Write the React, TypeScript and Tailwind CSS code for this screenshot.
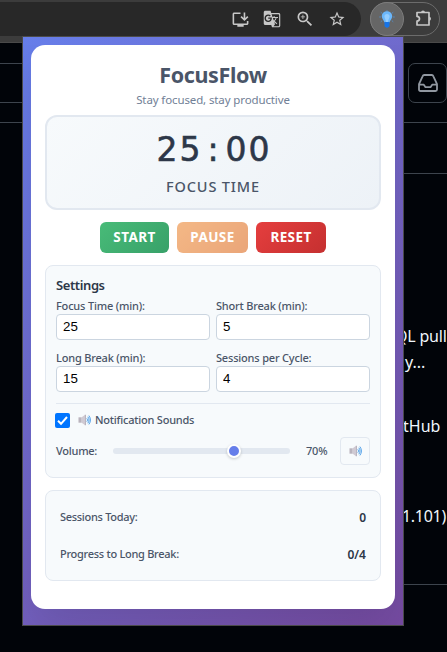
import React, { useState } from "react";
import { MdInstallDesktop, MdGTranslate, MdZoomIn, MdStarBorder } from "react-icons/md";

const sans = "font-['Noto_Sans','Open_Sans',sans-serif]";

function Bulb() {
  return (
    <svg width="18" height="18" viewBox="0 0 18 18">
      <g stroke="#4a9df0" strokeWidth="0.8" strokeLinecap="round" opacity="0.8">
        <path d="M1.6 7h1.2M15.2 7h1.2M3 2.4l.9.8M15 2.4l-.9.8M3 11.6l.9-.8M15 11.6l-.9-.8M9 0v.6" />
      </g>
      <path d="M9 1.2c-3.1 0-5.2 2.2-5.2 5 0 2.7 2.2 3.800 2.700 6.300h5c.5-2.500 2.700-3.600 2.700-6.300 0-2.800-2.100-5-5.200-5z" fill="#6bb7fb" />
      <path d="M9 4c-1.600 0-2.600 1-2.600 2.300 0 1.700 1.300 3 1.700 6.200h1.800c.4-3.200 1.700-4.500 1.700-6.200C11.600 5 10.600 4 9 4z" fill="#94cdff" />
      <path d="M6.500 12h5v3.600c0 1.300-1.200 2.200-2.500 2.200s-2.500-.9-2.500-2.200z" fill="#1674e8" />
    </svg>
  );
}

function Puzzle() {
  return (
    <svg width="18" height="18" viewBox="0 0 18 18" fill="none" stroke="#c7c7c7" strokeWidth="1.700" strokeLinejoin="round">
      <path d="M2 3.500h12v12.500H2v-3.800c1.500-.2 2.500-1.100 2.500-2.400S3.500 7.600 2 7.400z" />
      <path d="M6 3.500a2 2 0 0 1 4 0zM14 7.800a2 2 0 0 1 0 4z" fill="#c7c7c7" stroke="none" />
    </svg>
  );
}

function Inbox() {
  return (
    <svg width="20" height="18" viewBox="0 0 20 18" fill="none" stroke="#9198a1" strokeWidth="1.800" strokeLinejoin="round" strokeLinecap="round">
      <path d="M1 10.200 4.600 2.300C4.900 1.500 5.400 1 6.200 1h7.600c.8 0 1.300.5 1.600 1.300L19 10.200v5.300c0 1-.5 1.500-1.500 1.500h-15c-1 0-1.500-.5-1.500-1.500zM1 10.700h4.800l1.700 2.500h5l1.700-2.500H19" />
    </svg>
  );
}

function Speaker() {
  return (
    <svg width="13" height="12" viewBox="0 0 13 12" fill="none">
      <path d="M.5 3.300h3.200v5.400H.5z" fill="#b9b3bd" />
      <path d="M3.700 3.300 6.800 1v10L3.700 8.700z" fill="#d0cad3" />
      <path d="M6.800.8h1v10.400h-1z" fill="#aaa3ae" />
      <path d="M8.800 4.300c.9 1 .9 2.400 0 3.400M9.800 2.800c1.600 1.900 1.600 4.500 0 6.400M10.900 1.600c2 2.700 2 6.100 0 8.800" stroke="#4f9fe8" strokeWidth="1" />
    </svg>
  );
}

function Toolbar() {
  return (
    <div className="flex h-[43px] items-start border-b border-[#4a4a4a] bg-[#3c3c3c] pt-[2px]">
      <div className="flex h-[34px] w-[361px] shrink-0 items-center rounded-r-[17px] bg-[#282828] pl-[231px] text-[#c7c7c7]">
        <MdInstallDesktop size={19} />
        <MdGTranslate size={18} className="ml-[13px]" />
        <MdZoomIn size={20} className="ml-[14px]" />
        <MdStarBorder size={18} className="ml-[13px]" />
      </div>
      <div className="ml-[9px] flex h-[34px] w-[70px] shrink-0 rounded-full border border-[#6c6c6c]">
        <div className="-ml-px -mt-px flex h-[34px] w-[34px] items-center justify-center rounded-full border border-[#7c7c7c] bg-[#666]">
          <Bulb />
        </div>
        <div className="ml-[11px] mt-[6px]"><Puzzle /></div>
      </div>
    </div>
  );
}

function BackPage() {
  return (
    <div className="flex h-[609px] justify-between bg-[#010409]">
      <div className="w-[22px]">
        <div className="mt-[20px] h-[40px] border-y border-[#3d444d]" />
        <div className="mt-[19px] border-t border-[#3d444d]" />
      </div>
      <div className="w-[43px] whitespace-nowrap font-['Noto_Sans',sans-serif] text-[16px] leading-[26px] text-[#f0f6fc]">
        <div className="ml-[4px] mt-[20px] flex">
          <div className="flex h-[40px] w-[39px] shrink-0 items-center justify-center rounded-[7px] border border-[#3d444d]"><Inbox /></div>
        </div>
        <div className="mt-[19px] h-[52px] border-y border-[#3d444d]" />
        <div className="-ml-[9px] mt-[149px] tracking-[-0.2px]">QL pull</div>
        <div className="ml-[1px]">y...</div>
        <div className="-ml-px mt-[38px]">tHub</div>
        <div className="-ml-[2px] mt-[64px] tracking-[-0.3px]">1.101)</div>
        <div className="mt-[55px] border-t border-[#3d444d]" />
      </div>
    </div>
  );
}

function Field({ label, value }: { label: string; value: string }) {
  return (
    <label className="block">
      <span className="block h-[16px] text-[11px] font-medium leading-[16px] tracking-[-0.190px] text-[#4a5568]">{label}</span>
      <input
        defaultValue={value}
        className="block h-[26px] w-full rounded-[4px] border border-[#cbd5e0] bg-white px-[6px] pb-[2px] font-['Liberation_Sans',sans-serif] text-[13.300px] text-black outline-none"
      />
    </label>
  );
}

function Popup() {
  const [on, setOn] = useState(true);
  return (
    <div className={`absolute left-[22px] top-[36px] h-[590px] w-[382px] border border-[#4b4b4b] bg-linear-135 from-[#667eea] to-[#764ba2] p-[8px] ${sans}`}>
      <div className="h-[564px] w-[364px] rounded-[14px] bg-white px-[14px] pt-[14px] shadow-[0_20px_40px_rgba(0,0,0,0.1)] [clip-path:inset(0_-8px_-16px_-8px)]">
        <h1 className="h-[32px] text-center text-[21.500px] font-bold leading-[32px] tracking-[-0.350px] text-[#4a5568]">FocusFlow</h1>
        <p className="h-[24px] text-center text-[11.500px] leading-[18px] tracking-[-0.120px] text-[#718096]">Stay focused, stay productive</p>

        <section className="flex h-[95px] flex-col items-center rounded-[12px] border-2 border-[#e2e8f0] bg-linear-135 from-[#f7fafc] to-[#edf2f7] pt-[13px]">
          <div className="flex h-[40px] font-['DejaVu_Sans',sans-serif] text-[33px] leading-[40px] text-[#2d3748] [-webkit-text-stroke:0.6px_#2d3748]">
            {"25:00".split("").map((c, i) => (
              <span key={i} className="w-[23px] text-center">{c}</span>
            ))}
          </div>
          <div className="mt-[6px] text-[14.500px] font-medium leading-[20px] tracking-[0.850px] text-[#4a5568]">FOCUS TIME</div>
        </section>

        <div className="mt-[12px] flex h-[31px] justify-center gap-[8px] text-[13.500px] font-bold tracking-[0.400px] text-white">
          <button className="w-[69px] rounded-[6px] bg-linear-135 from-[#48bb78] to-[#38a169]">START</button>
          <button className="w-[71px] rounded-[6px] bg-linear-135 from-[#ed8936] to-[#dd6b20] opacity-60">PAUSE</button>
          <button className="w-[70px] rounded-[6px] bg-linear-135 from-[#e53e3e] to-[#c53030]">RESET</button>
        </div>

        <section className="mt-[12px] h-[213px] rounded-[8px] border border-[#e2e8f0] bg-[#f7fafc] px-[10px] pt-[9px] text-[#4a5568]">
          <h2 className="h-[23px] text-[13px] font-semibold leading-[21px] tracking-[-0.400px] text-[#2d3748]">Settings</h2>
          <div className="grid grid-cols-2 gap-x-[6px] gap-y-[10px]">
            <Field label="Focus Time (min):" value="25" />
            <Field label="Short Break (min):" value="5" />
            <Field label="Long Break (min):" value="15" />
            <Field label="Sessions per Cycle:" value="4" />
          </div>
          <div className="mt-[11px] flex h-[33px] items-center border-t border-[#e2e8f0]">
            <button
              onClick={() => setOn(!on)}
              className="-ml-px flex h-[15px] w-[15px] items-center justify-center rounded-[2px] bg-[#0075ff]"
            >
              {on && (
                <svg width="11" height="11" viewBox="0 0 11 11" fill="none" stroke="white" strokeWidth="2">
                  <path d="M1 5.800 4 8.800 10 2" />
                </svg>
              )}
            </button>
            <span className="ml-[8px]"><Speaker /></span>
            <span className="ml-[4px] text-[11px] font-medium tracking-[-0.220px]">Notification Sounds</span>
          </div>
          <div className="flex h-[30px] items-center text-[11px] font-medium">
            <span className="w-[57px] tracking-[-0.250px]">Volume:</span>
            <div className="flex h-[6px] w-[177px] items-center rounded-full bg-[#e2e8f0]">
              <div className="ml-[114px] h-[14px] w-[14px] rounded-full border-2 border-white bg-[#667eea] shadow-[0_1px_3px_rgba(0,0,0,0.2)]" />
            </div>
            <span className="ml-[16px] w-[34px] tracking-[-0.200px]">70%</span>
            <button className="flex h-[28px] w-[30px] items-center justify-center rounded-[4px] border border-[#e2e8f0]"><Speaker /></button>
          </div>
        </section>

        <section className="mt-[12px] h-[91px] rounded-[8px] border border-[#e2e8f0] bg-[#f7fafc] px-[14px] pt-[8px] text-[11px] font-medium text-[#4a5568]">
          <div className="flex h-[37px] items-center justify-between">
            <span className="tracking-[-0.300px]">Sessions Today:</span>
            <span className="text-[12px] font-semibold text-[#2d3748]">0</span>
          </div>
          <div className="flex h-[37px] items-center justify-between">
            <span className="tracking-[-0.280px]">Progress to Long Break:</span>
            <span className="text-[12px] font-semibold text-[#2d3748]">0/4</span>
          </div>
        </section>
      </div>
    </div>
  );
}

export default function App() {
  return (
    <div className="relative h-[652px] w-[447px] overflow-hidden bg-[#010409]">
      <Toolbar />
      <BackPage />
      <Popup />
    </div>
  );
}
